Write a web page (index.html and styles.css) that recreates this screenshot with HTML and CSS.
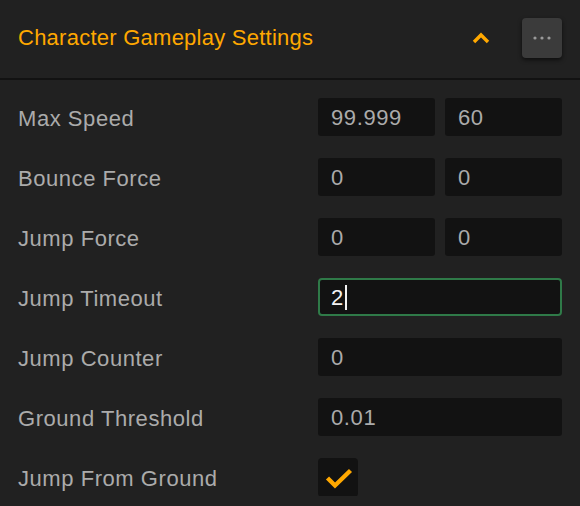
FILE: index.html
```html
<!DOCTYPE html>
<html>
    <head>
        <title>Character Gameplay Settings</title>
        <meta charset="utf-8" />
        <link rel="stylesheet" href="styles.css">
    </head>
    <body>
        <article class="panel">
            <header class="head">
                <h1 class="title">Character Gameplay Settings</h1>
                <span class="chevron">
                    <svg width="18" height="12" viewBox="0 0 18 12">
                        <path d="M2 10 L9 3 L16 10" fill="none" stroke="#ffa800" stroke-width="3.4"/>
                    </svg>
                </span>
                <button class="more">
                    <svg width="18" height="4" viewBox="0 0 18 4">
                        <circle cx="2" cy="2" r="1.6" fill="#9a9a9a"/>
                        <circle cx="9" cy="2" r="1.6" fill="#9a9a9a"/>
                        <circle cx="16" cy="2" r="1.6" fill="#9a9a9a"/>
                    </svg>
                </button>
            </header>

            <section class="rows">
                <div class="row">
                    <label>Max Speed</label>
                    <div class="fields">
                        <div class="field">99.999</div>
                        <div class="field">60</div>
                    </div>
                </div>
                <div class="row">
                    <label>Bounce Force</label>
                    <div class="fields">
                        <div class="field">0</div>
                        <div class="field">0</div>
                    </div>
                </div>
                <div class="row">
                    <label>Jump Force</label>
                    <div class="fields">
                        <div class="field">0</div>
                        <div class="field">0</div>
                    </div>
                </div>
                <div class="row">
                    <label>Jump Timeout</label>
                    <div class="fields">
                        <div class="field focus">2<span class="caret"></span></div>
                    </div>
                </div>
                <div class="row">
                    <label>Jump Counter</label>
                    <div class="fields">
                        <div class="field">0</div>
                    </div>
                </div>
                <div class="row">
                    <label>Ground Threshold</label>
                    <div class="fields">
                        <div class="field">0.01</div>
                    </div>
                </div>
                <div class="row">
                    <label>Jump From Ground</label>
                    <div class="fields">
                        <div class="check">
                            <svg width="40" height="39" viewBox="0 0 40 39">
                                <path d="M9.5 20 L17 27.5 L32.5 12.5" fill="none" stroke="#ffa800" stroke-width="4.4"/>
                            </svg>
                        </div>
                    </div>
                </div>
            </section>
        </article>
    </body>
</html>
```

FILE: styles.css
```css
* {
    box-sizing: border-box;
    margin: 0;
    padding: 0;
    border: 0;
}
body {
    background-color: #212121;
    font-family: "Liberation Sans", Arial, sans-serif;
}
.head {
    display: flex;
    align-items: center;
    height: 80px;
    padding: 0 18px 3px 18px;
    border-bottom: 2px solid #121212;
}
.title {
    flex: auto;
    color: #ffa800;
    font-size: 22px;
    font-weight: normal;
    letter-spacing: 0.25px;
}
.chevron {
    display: flex;
    margin-right: 32px;
}
.more {
    display: flex;
    align-items: center;
    justify-content: center;
    width: 40px;
    height: 40px;
    background-color: #3b3b3b;
    border-radius: 4px;
    box-shadow: 0 2px 4px rgba(0, 0, 0, 0.6);
}
.rows {
    display: flex;
    flex-direction: column;
    gap: 22px;
    padding: 18px 18px 0 18px;
}
.row {
    display: flex;
    align-items: center;
    height: 38px;
}
label {
    flex: auto;
    padding-top: 3px;
    color: #ababab;
    font-size: 22px;
    letter-spacing: 0.55px;
}
.fields {
    display: flex;
    gap: 10px;
    width: 244px;
}
.field {
    display: flex;
    align-items: center;
    flex: 1;
    height: 38px;
    padding: 2px 0 0 13px;
    background-color: #121212;
    border-radius: 3px;
    color: #ababab;
    font-size: 22px;
    letter-spacing: 0.6px;
}
.field.focus {
    border: 2px solid #2f7a48;
    border-radius: 4px;
    padding: 1px 0 0 11px;
    color: #f2f2f2;
}
.caret {
    width: 2px;
    height: 25px;
    margin-left: 1px;
    background-color: #f2f2f2;
}
.check {
    display: flex;
    width: 40px;
    height: 39px;
    background-color: #121212;
    border-radius: 4px;
}
```
